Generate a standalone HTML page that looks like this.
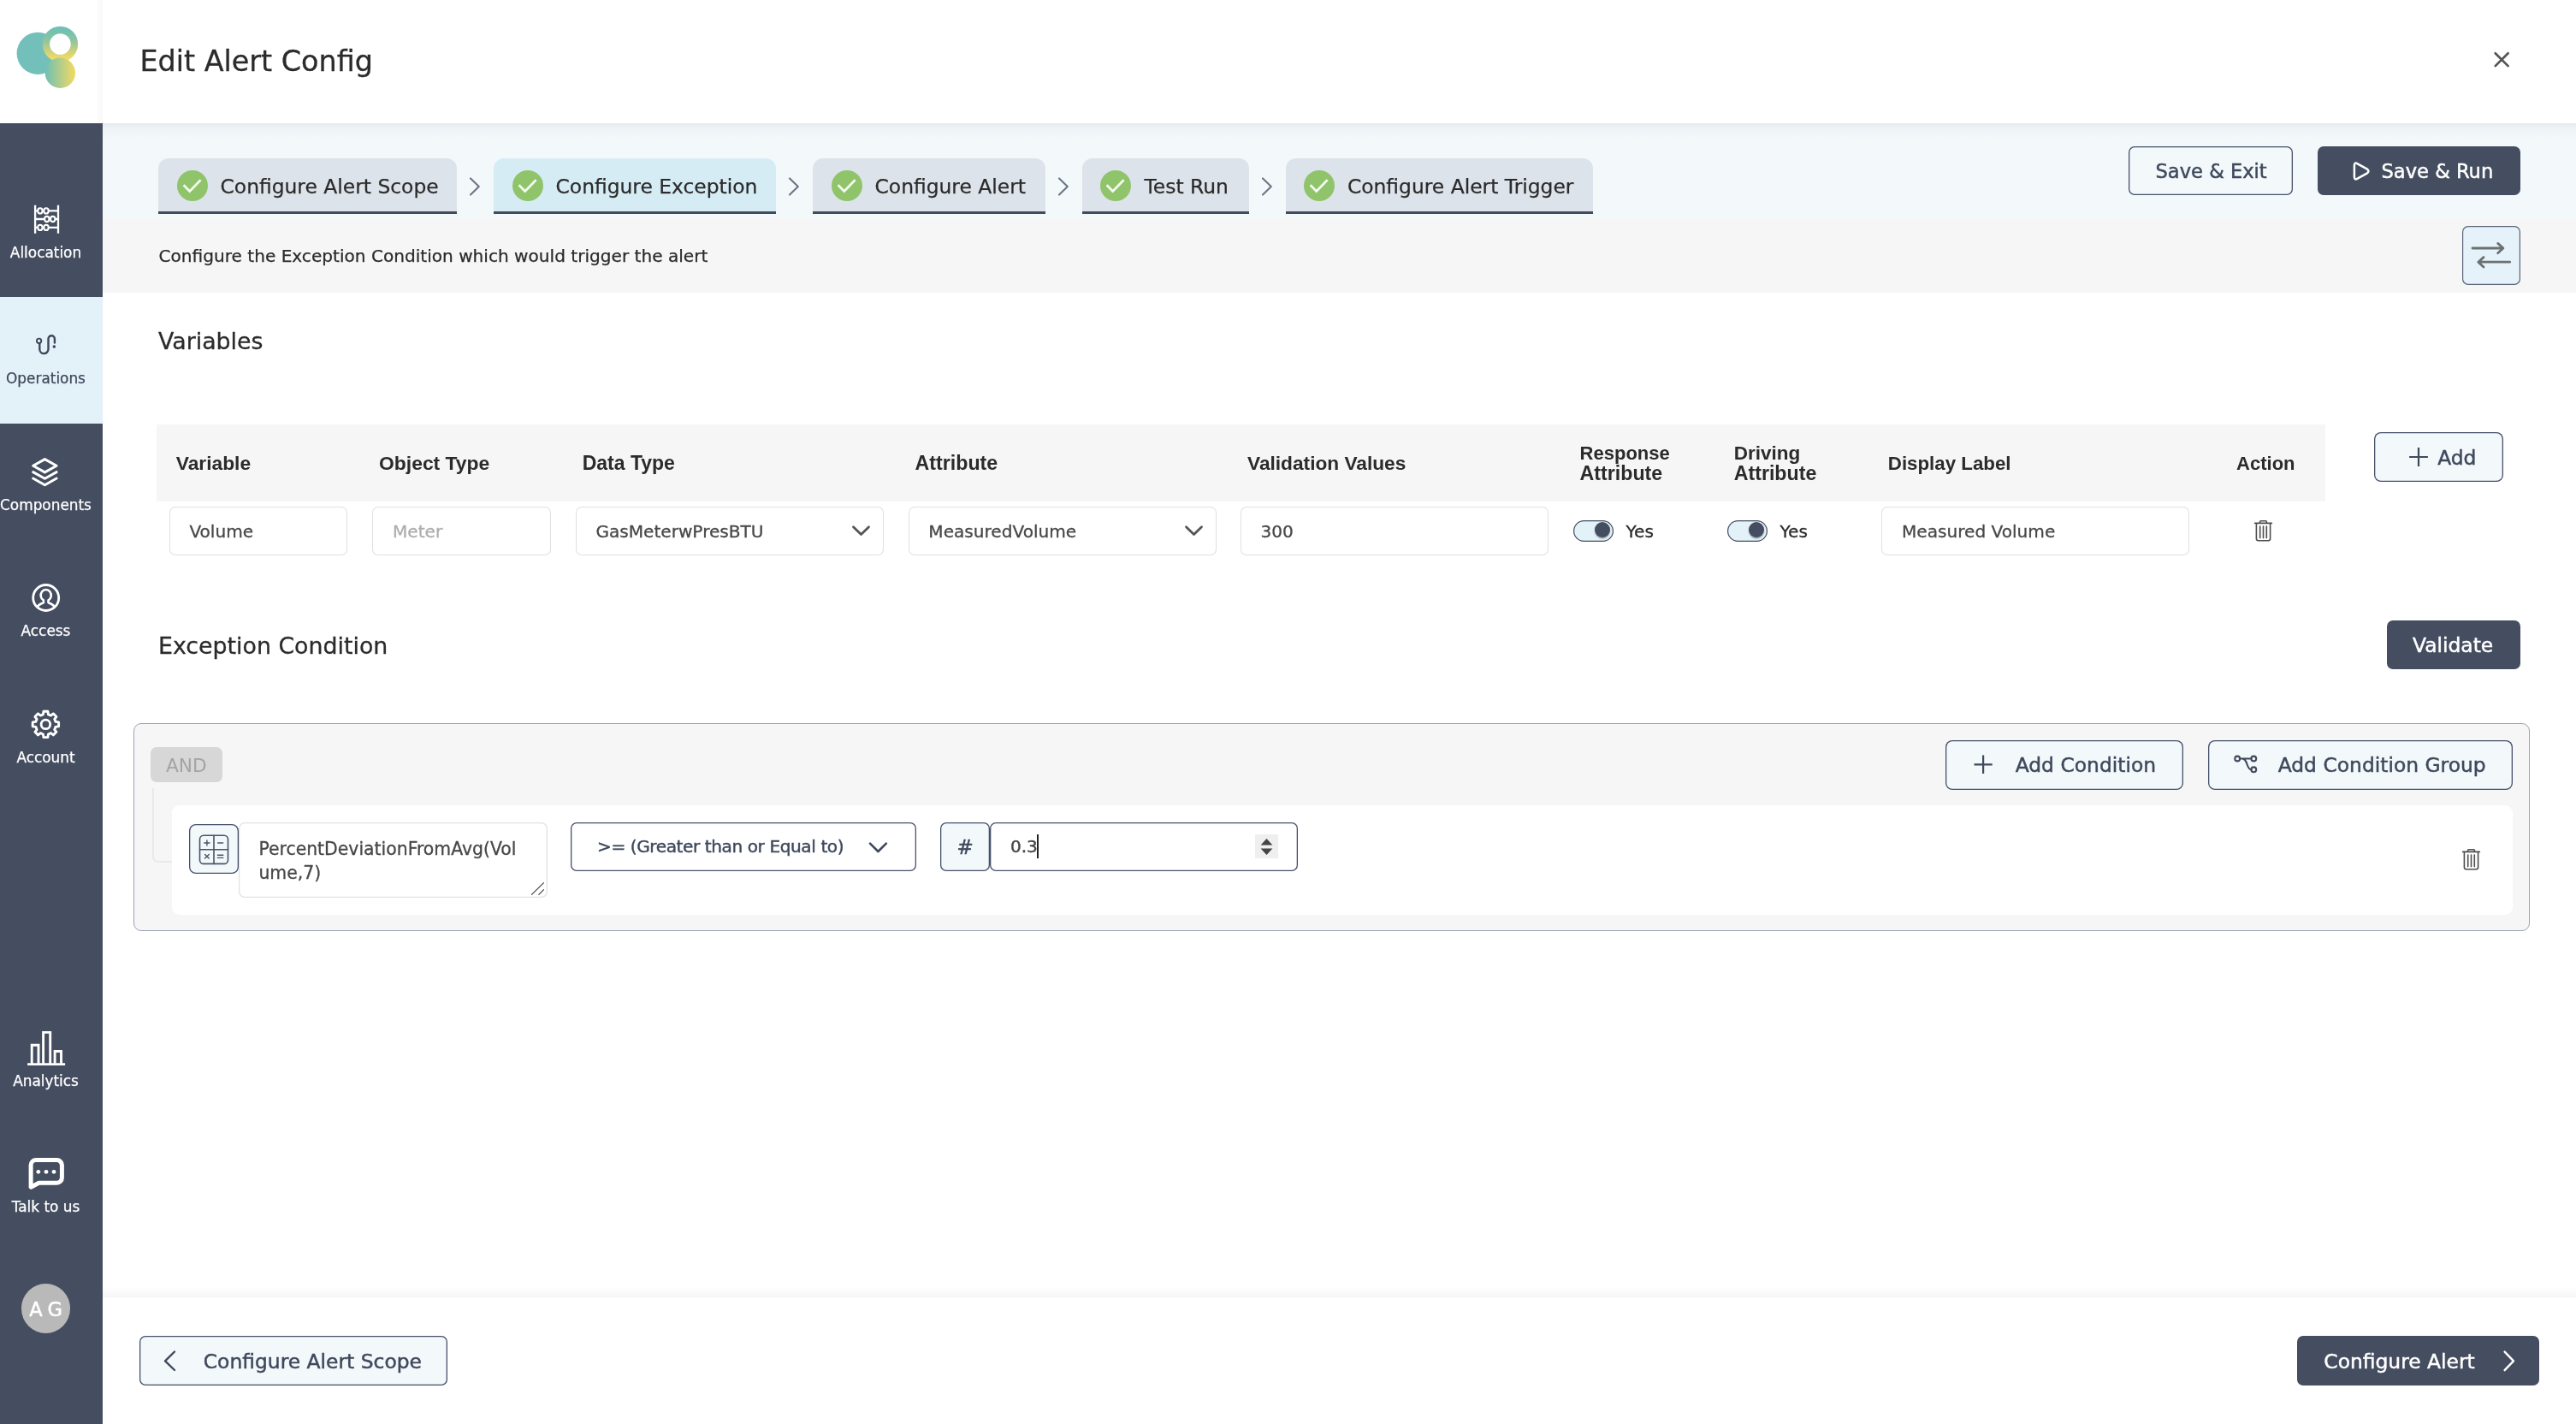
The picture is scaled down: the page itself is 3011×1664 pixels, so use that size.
<!DOCTYPE html>
<html lang="en">
<head>
<meta charset="utf-8">
<title>Edit Alert Config</title>
<style>
*{box-sizing:border-box;margin:0;padding:0}
html,body{width:3011px;height:1664px;overflow:hidden;background:#fff}
body{position:relative;will-change:transform;font-family:"DejaVu Sans","Liberation Sans",sans-serif;color:#2b2b2b;-webkit-font-smoothing:antialiased}
.abs{position:absolute}
.t{position:absolute;white-space:nowrap;line-height:1}
/* sidebar */
#side{left:0;top:0;width:120px;height:1664px;background:#454e60}
#logo{left:0;top:0;width:120px;height:144px;background:linear-gradient(90deg,#fff 0,#fff 112px,#f8f8f8 120px)}
.nav{left:0;width:120px;height:148px}
.nav svg{position:absolute;overflow:visible}
.nl{position:absolute;left:0;width:107px;text-align:center;font-size:16.9px;line-height:20px;color:#fff;white-space:nowrap;-webkit-text-stroke:.25px currentColor}
#navact{left:0;top:347px;width:120px;height:148px;background:#e3f2f8}
/* header */
#hdr{left:120px;top:0;width:2891px;height:144px;background:#fff}
#band1{left:120px;top:144px;width:2891px;height:111px;background:linear-gradient(180deg,#e4eaef 0,#eef3f7 6px,#f3f8fb 18px,#f3f8fb 100%)}
#band2{left:120px;top:254.5px;width:2891px;height:87px;background:#f6f6f6}
.tab{position:absolute;top:185px;height:65px;border-radius:12px 12px 0 0;background:#dde3ea;border-bottom:3.5px solid #434c5e}
.tab.on{background:#d6ecf5}
.tab .ck{position:absolute;left:21.2px;top:13.7px;width:36px;height:36px}
.tab span{position:absolute;left:72.5px;top:19px;font-size:23.4px;line-height:28px;white-space:nowrap;color:#2b2b2b;-webkit-text-stroke:.25px #2b2b2b}
.sep{position:absolute;top:206px;width:16px;height:24px}
.btn{position:absolute;border-radius:7px;font-size:23.4px;white-space:nowrap;-webkit-text-stroke:.45px currentColor}
.btn.lt{background:#f3f8fb;box-shadow:inset 0 0 0 1.3px #46506a;color:#3f495c}
.btn.dk{background:#454e60;color:#fff}
.btn span{position:absolute;line-height:28px}
.btn svg{position:absolute;overflow:visible}
/* table */
#thead{left:183px;top:496px;width:2535px;height:90px;background:#f6f6f6}
.th{position:absolute;font-family:"Liberation Sans","DejaVu Sans",sans-serif;font-weight:700;font-size:22.9px;line-height:23px;color:#2b2b2b;white-space:nowrap}
.inp{position:absolute;top:592px;height:56.5px;box-shadow:inset 0 0 0 1px #e0e0e0;border-radius:7px;background:#fff;font-size:20.1px;color:#484848;-webkit-text-stroke:.3px currentColor}
.inp span{position:absolute;left:23px;top:15.8px;line-height:26px;white-space:nowrap}
.inp svg{position:absolute;overflow:visible}
.tog{position:absolute;top:607.8px;width:47.2px;height:25px;border-radius:13px;background:#e3f2f9;box-shadow:inset 0 0 0 1.2px #454e60}
.tog i{position:absolute;right:4.4px;top:2.3px;width:18px;height:18px;border-radius:50%;background:#454e60;box-shadow:0 1.5px 1.5px rgba(0,0,0,.35)}
.yes{position:absolute;font-size:20.1px;line-height:26px;top:607.6px;color:#2b2b2b;-webkit-text-stroke:.3px #2b2b2b}
/* group */
#grp{left:156px;top:845px;width:2800.5px;height:243px;background:#f6f6f6;border:1.3px solid #9aa4b4;border-radius:9px}
#and{left:176px;top:873px;width:84px;height:41px;border-radius:7px;background:#d7d7d7}
#row{left:201px;top:941px;width:2736px;height:128px;background:#fff;border-radius:9px}
</style>
</head>
<body>
<!--SIDEBAR-->
<div class="abs" id="side"></div>
<div class="abs" id="navact"></div>
<div class="abs" id="logo">
<svg class="abs" style="left:0;top:0" width="120" height="144" viewBox="0 0 120 144">
<defs>
<linearGradient id="gv" x1="0" y1="0" x2="0" y2="1"><stop offset="0" stop-color="#70c0b4"/><stop offset="0.35" stop-color="#8cc4a0"/><stop offset="1" stop-color="#f2da64"/></linearGradient>
<linearGradient id="gh" x1="0" y1="0" x2="1" y2="0"><stop offset="0" stop-color="#6fc0b4"/><stop offset="1" stop-color="#f4da60"/></linearGradient>
</defs>
<circle cx="44.2" cy="62.3" r="24.6" fill="#72c0b9"/>
<circle cx="70.4" cy="51.5" r="16.5" fill="#fff" stroke="url(#gv)" stroke-width="8.4"/>
<circle cx="70.4" cy="85.2" r="17.7" fill="url(#gh)"/>
</svg>
</div>
<svg class="abs" style="left:0;top:0" width="120" height="1664" viewBox="0 0 120 1664" fill="none" stroke="#fff" stroke-linecap="round" stroke-linejoin="round">
<!-- allocation -->
<g stroke-width="2.3">
<path d="M41.1 239.8V272.7M68 239.8V272.7M41.1 246.4H68M41.1 256H68M41.1 265.9H68" stroke-linecap="butt"/>
<g fill="#454e60" stroke-width="2.1">
<ellipse cx="46.9" cy="246.4" rx="2.7" ry="3.1"/><ellipse cx="54" cy="246.4" rx="2.7" ry="3.1"/>
<ellipse cx="54.8" cy="256" rx="2.7" ry="3.1"/><ellipse cx="61.7" cy="256" rx="2.7" ry="3.1"/>
<ellipse cx="46.9" cy="265.9" rx="2.7" ry="3.1"/><ellipse cx="54" cy="265.9" rx="2.7" ry="3.1"/>
</g></g>
<!-- operations -->
<g stroke="#3f485b" stroke-width="2.4">
<path d="M46.3 401.8V408a5.1 5.1 0 0 0 10.2 0V396a3.7 3.7 0 0 1 7.4 0V400.6"/>
<circle cx="45.6" cy="398.3" r="2.7" stroke-width="1.9"/>
<circle cx="63.3" cy="405.1" r="1.8" fill="#3f485b" stroke="none"/>
</g>
<!-- components -->
<g stroke-width="3">
<path d="M52.4 536.6L66.1 544.25L52.4 551.9L38.7 544.25Z"/>
<path d="M38.7 551.65L52.4 559.3L66.1 551.65"/>
<path d="M38.7 559.05L52.4 566.7L66.1 559.05"/>
</g>
<!-- access -->
<g stroke-width="2.8">
<circle cx="53.7" cy="698.5" r="15"/>
<path d="M43.6 709.3c1.6-3.4 5.2-4 7.3-5.2v-2.6a6.1 6.6 0 1 1 5.6 0v2.6c2.1 1.2 5.7 1.8 7.3 5.2" stroke-width="2.6"/>
</g>
<!-- account -->
<g stroke-width="2.9">
<path d="M50.4 834.8 L50.9 831.2 L55.9 831.2 L56.4 834.8 L59.5 836.1 L62.3 833.9 L65.9 837.5 L63.7 840.3 L65.0 843.4 L68.6 843.9 L68.6 848.9 L65.0 849.4 L63.7 852.5 L65.9 855.3 L62.3 858.9 L59.5 856.7 L56.4 858.0 L55.9 861.6 L50.9 861.6 L50.4 858.0 L47.3 856.7 L44.5 858.9 L40.9 855.3 L43.1 852.5 L41.8 849.4 L38.2 848.9 L38.2 843.9 L41.8 843.4 L43.1 840.3 L40.9 837.5 L44.5 833.9 L47.3 836.1Z"/>
<circle cx="53.4" cy="846.4" r="5.3" stroke-width="2.8"/>
</g>
<!-- analytics -->
<g stroke-width="2.9" stroke-linecap="butt" stroke-linejoin="miter">
<path d="M32.1 1243.6H76.1M37.2 1243.5V1221.2H45V1243.5M50.6 1243.5V1206.4H58.7V1243.5M64.1 1243.5V1228.5H71.5V1243.5"/>
</g>
<!-- talk -->
<g stroke-width="5">
<path d="M36.1 1387.2V1361.6a6 6 0 0 1 6-6H66.4a6 6 0 0 1 6 6V1376.2a6 6 0 0 1-6 6H45.5Z"/>
<g fill="#fff" stroke="none"><circle cx="44.8" cy="1369.3" r="2.4"/><circle cx="54" cy="1369.3" r="2.4"/><circle cx="63" cy="1369.3" r="2.4"/></g>
</g>
</svg>
<div class="nl" style="top:285px">Allocation</div>
<div class="nl" style="top:432.4px;color:#3f485b">Operations</div>
<div class="nl" style="top:579.9px">Components</div>
<div class="nl" style="top:727.4px">Access</div>
<div class="nl" style="top:874.9px">Account</div>
<div class="nl" style="top:1253.2px">Analytics</div>
<div class="nl" style="top:1400.1px">Talk to us</div>
<div class="abs" style="left:24.6px;top:1500px;width:57.5px;height:58px;border-radius:50%;background:#b9b9b9;color:#fff;font-size:22.5px;line-height:61px;-webkit-text-stroke:.5px #fff;text-align:center;letter-spacing:-.6px;white-space:nowrap">A G</div>
<!--/SIDEBAR-->
<!--HEADER-->
<div class="abs" id="hdr"></div>
<div class="abs" id="band1"></div>
<div class="abs" id="band2"></div>
<div class="t" style="left:163.4px;top:49.7px;font-size:33.4px;-webkit-text-stroke:.3px #2b2b2b;line-height:44px;color:#2b2b2b">Edit Alert Config</div>
<svg class="abs" style="left:2910px;top:56px;overflow:visible" width="28" height="28" viewBox="2910 56 28 28" fill="none" stroke="#555" stroke-width="2.7" stroke-linecap="round"><path d="M2916.7 62.2L2931.6 77.1M2931.6 62.2L2916.7 77.1"/></svg>
<div class="tab" style="left:185px;width:349px"><svg class="ck" style="left:22px" viewBox="0 0 36 36"><circle cx="18" cy="18" r="18" fill="#90c46a"/><path d="M7.6 17.2L14.7 24.5L27.6 11.2" fill="none" stroke="#f4faef" stroke-width="2.7"/></svg><span>Configure Alert Scope</span></div>
<div class="tab on" style="left:577px;width:330px"><svg class="ck" style="left:22px" viewBox="0 0 36 36"><circle cx="18" cy="18" r="18" fill="#90c46a"/><path d="M7.6 17.2L14.7 24.5L27.6 11.2" fill="none" stroke="#f4faef" stroke-width="2.7"/></svg><span>Configure Exception</span></div>
<div class="tab" style="left:950px;width:272px"><svg class="ck" style="left:21.7px" viewBox="0 0 36 36"><circle cx="18" cy="18" r="18" fill="#90c46a"/><path d="M7.6 17.2L14.7 24.5L27.6 11.2" fill="none" stroke="#f4faef" stroke-width="2.7"/></svg><span>Configure Alert</span></div>
<div class="tab" style="left:1265px;width:195px"><svg class="ck" style="left:21.3px" viewBox="0 0 36 36"><circle cx="18" cy="18" r="18" fill="#90c46a"/><path d="M7.6 17.2L14.7 24.5L27.6 11.2" fill="none" stroke="#f4faef" stroke-width="2.7"/></svg><span>Test Run</span></div>
<div class="tab" style="left:1503px;width:359px"><svg class="ck" style="left:21px" viewBox="0 0 36 36"><circle cx="18" cy="18" r="18" fill="#90c46a"/><path d="M7.6 17.2L14.7 24.5L27.6 11.2" fill="none" stroke="#f4faef" stroke-width="2.7"/></svg><span style="left:71.9px">Configure Alert Trigger</span></div>
<svg class="sep" style="left:546.5px" viewBox="0 0 16 24" fill="none" stroke="#6c7486" stroke-width="2.1" stroke-linecap="round" stroke-linejoin="round"><path d="M3 2.4L12.8 12L3 21.6"/></svg>
<svg class="sep" style="left:919.5px" viewBox="0 0 16 24" fill="none" stroke="#6c7486" stroke-width="2.1" stroke-linecap="round" stroke-linejoin="round"><path d="M3 2.4L12.8 12L3 21.6"/></svg>
<svg class="sep" style="left:1234.5px" viewBox="0 0 16 24" fill="none" stroke="#6c7486" stroke-width="2.1" stroke-linecap="round" stroke-linejoin="round"><path d="M3 2.4L12.8 12L3 21.6"/></svg>
<svg class="sep" style="left:1472.5px" viewBox="0 0 16 24" fill="none" stroke="#6c7486" stroke-width="2.1" stroke-linecap="round" stroke-linejoin="round"><path d="M3 2.4L12.8 12L3 21.6"/></svg>
<div class="btn lt" style="left:2488px;top:171px;width:192px;height:56.8px"><span style="left:31.5px;top:14.7px;font-size:22.6px">Save &amp; Exit</span></div>
<div class="btn dk" style="left:2709px;top:171px;width:237px;height:56.8px"><svg style="left:0;top:0" width="237" height="57" viewBox="0 0 237 57" fill="none" stroke="#fff" stroke-width="2.5" stroke-linejoin="round"><path d="M42.9 22.4V35.6Q42.9 39.8 46.6 37.7L58 31.3Q60.9 29 58 26.7L46.6 20.3Q42.9 18.2 42.9 22.4Z"/></svg><span style="left:74.5px;top:14.7px;font-size:22.6px">Save &amp; Run</span></div>
<div class="t" style="left:185.5px;top:286px;font-size:20.1px;line-height:26px;color:#2b2b2b;-webkit-text-stroke:.25px #2b2b2b">Configure the Exception Condition which would trigger the alert</div>
<div class="btn" style="left:2878.2px;top:264px;width:67.6px;height:69px;background:#e5f2f9;box-shadow:inset 0 0 0 1.2px #5a6478"><svg style="left:0;top:0" width="68" height="68" viewBox="0 0 68 68" fill="none" stroke="#6b7071" stroke-width="2.8" stroke-linecap="round" stroke-linejoin="round"><path d="M12 26H47.5M41.7 20.4L47.9 26L41.7 31.7M55.7 42.2H19.2M25 36.6L18.8 42.2L25 48"/></svg></div>
<!--/HEADER-->
<!--TABLE-->
<div class="t" style="left:185px;top:381px;font-size:26.8px;line-height:36px;color:#2b2b2b;-webkit-text-stroke:.3px #2b2b2b">Variables</div>
<div class="abs" id="thead"></div>
<div class="th" style="left:205.7px;top:529.9px;font-size:22.8px">Variable</div>
<div class="th" style="left:443px;top:529.9px;font-size:22.9px">Object Type</div>
<div class="th" style="left:680.7px;top:529.9px;font-size:23px">Data Type</div>
<div class="th" style="left:1069.6px;top:529.9px;font-size:23.2px">Attribute</div>
<div class="th" style="left:1458px;top:529.9px;font-size:22.7px">Validation Values</div>
<div class="th" style="left:1846.6px;top:518.3px;line-height:22.8px;font-size:23.2px"><span style="font-size:22px">Response</span><br>Attribute</div>
<div class="th" style="left:2026.7px;top:518.3px;line-height:22.8px;font-size:23.2px"><span style="font-size:22.5px">Driving</span><br>Attribute</div>
<div class="th" style="left:2206.8px;top:529.9px;font-size:22.3px">Display Label</div>
<div class="th" style="left:2614.1px;top:529.9px;font-size:22px">Action</div>
<div class="btn lt" style="left:2775px;top:505px;width:151px;height:57.8px;border-radius:8px"><svg style="left:0;top:0" width="151" height="58" viewBox="0 0 151 58" fill="none" stroke="#3f495c" stroke-width="2.2" stroke-linecap="butt"><path d="M41.1 29H62.9M52 18V40"/></svg><span style="left:74.2px;top:16.2px">Add</span></div>
<div class="inp" style="left:198px;width:207.6px"><span style="left:23.4px">Volume</span></div>
<div class="inp" style="left:435.3px;width:209.2px;color:#adadad"><span style="left:23.7px">Meter</span></div>
<div class="inp" style="left:673.2px;width:359.6px"><span style="left:23.2px">GasMeterwPresBTU</span><svg style="left:322.5px;top:22px" width="21" height="13" viewBox="0 0 21 13" fill="none" stroke="#555" stroke-width="2.8" stroke-linecap="round" stroke-linejoin="round"><path d="M1.5 1.8L10.5 10.6L19.5 1.8"/></svg></div>
<div class="inp" style="left:1062px;width:360px"><span style="left:23.3px">MeasuredVolume</span><svg style="left:323px;top:22px" width="21" height="13" viewBox="0 0 21 13" fill="none" stroke="#555" stroke-width="2.8" stroke-linecap="round" stroke-linejoin="round"><path d="M1.5 1.8L10.5 10.6L19.5 1.8"/></svg></div>
<div class="inp" style="left:1450px;width:360.2px"><span style="left:23.4px">300</span></div>
<div class="tog" style="left:1838.8px"><i></i></div><div class="yes" style="left:1900.5px">Yes</div>
<div class="tog" style="left:2019px"><i></i></div><div class="yes" style="left:2080.5px">Yes</div>
<div class="inp" style="left:2199.3px;width:359.8px"><span style="left:23.7px">Measured Volume</span></div>
<svg class="abs" style="left:2635.3px;top:608px;overflow:visible" width="21" height="25" viewBox="0 0 21 25" fill="none" stroke="#4d4d4d" stroke-width="1.6" stroke-linecap="round"><path d="M0.6 3.4H20.4M6.6 3.2V1.6Q6.6 0.7 7.5 0.7H13.5Q14.4 0.7 14.4 1.6V3.2M2.4 3.4V21.6Q2.4 23.8 4.6 23.8H16.4Q18.6 23.8 18.6 21.6V3.4M6.7 7V20.6M10.5 7V20.6M14.3 7V20.6"/></svg>
<div class="t" style="left:185px;top:737.4px;font-size:26.8px;line-height:36px;color:#2b2b2b;-webkit-text-stroke:.3px #2b2b2b">Exception Condition</div>
<div class="btn dk" style="left:2790px;top:725.3px;width:155.8px;height:56.3px"><span style="left:30px;top:14.8px">Validate</span></div>
<!--/TABLE-->
<!--GROUP-->
<div class="abs" id="grp"></div>
<div class="abs" id="and"></div>
<div class="t" style="left:194px;top:882px;font-size:21.7px;line-height:26px;color:#a4a4a4">AND</div>
<div class="abs" style="left:178.3px;top:921px;width:24px;height:87px;border-left:2.6px solid #e9e9e9;border-bottom:2.6px solid #e9e9e9;border-bottom-left-radius:7px"></div>
<div class="btn lt" style="left:2274.1px;top:865.2px;width:277.5px;height:57.4px;border-radius:8px"><svg style="left:0;top:0" width="277" height="57" viewBox="0 0 277 57" fill="none" stroke="#3f495c" stroke-width="2.2"><path d="M33.5 28.3H54.7M44.1 17.5V39.1"/></svg><span style="left:81.6px;top:14.9px">Add Condition</span></div>
<div class="btn lt" style="left:2581.2px;top:865.2px;width:355.4px;height:57.4px;border-radius:8px"><svg style="left:0;top:0" width="355" height="57" viewBox="0 0 355 57" fill="none" stroke="#3f495c" stroke-width="2.1" stroke-linecap="round"><circle cx="34.2" cy="21.5" r="2.9"/><circle cx="53.3" cy="21.5" r="2.9"/><circle cx="53.3" cy="34.3" r="2.9"/><path d="M37 21.5H50.5M40.5 21.6C46.5 22 44.5 34.3 50.6 34.3"/></svg><span style="left:81.5px;top:14.9px">Add Condition Group</span></div>
<div class="abs" id="row"></div>
<div class="btn lt" style="left:221.1px;top:963.2px;width:57.6px;height:57.6px;border-radius:8px"><svg style="left:0;top:0" width="58" height="58" viewBox="0 0 58 58" fill="none" stroke="#4a5468" stroke-width="1.6" stroke-linecap="round"><rect x="12.5" y="13.2" width="33" height="33.2" rx="4.5"/><path d="M29 13.2V46.4M12.5 29.8H45.5"/><path d="M17.8 22H24M20.9 18.9V25.1M33.6 22H39.6M18.6 35.4L23.2 40M23.2 35.4L18.6 40M33.4 36.2H39.8M33.4 39.4H39.8" stroke-width="1.4"/></svg></div>
<div class="abs" style="left:279.2px;top:961.1px;width:360.4px;height:87.5px;border-radius:7px;background:#fff;box-shadow:inset 0 0 0 1.3px #e2e2e2"></div>
<div class="t" style="left:302.4px;top:977.6px;font-size:20.4px;line-height:28.8px;color:#484848;-webkit-text-stroke:.3px #484848">PercentDeviationFromAvg(Vol<br>ume,7)</div>
<svg class="abs" style="left:618px;top:1028px" width="20" height="20" viewBox="617 1028 20 20" fill="none" stroke="#3a3a3a" stroke-width="1.1" stroke-linecap="round"><path d="M620.4 1045.3L634.5 1031.6M628.8 1045.3L634.5 1039.7"/></svg>
<div class="btn lt" style="left:666.8px;top:961px;width:404px;height:56.6px;box-shadow:inset 0 0 0 1.3px #46506a;background:#fff"><span style="left:31.2px;top:15.4px;font-size:20.1px;line-height:26px;letter-spacing:-.42px">&gt;= (Greater than or Equal to)</span><svg style="left:348px;top:22px" width="23" height="14" viewBox="0 0 23 14" fill="none" stroke="#3f495c" stroke-width="2.6" stroke-linecap="round" stroke-linejoin="round"><path d="M2 2.6L11.4 12L20.8 2.6"/></svg></div>
<div class="btn lt" style="left:1099.3px;top:961px;width:57.8px;height:56.6px"><span style="left:0;width:57.8px;text-align:center;top:14.5px;font-size:23px">#</span></div>
<div class="btn lt" style="left:1156.6px;top:961px;width:360.3px;height:56.6px;background:#fff"><span style="left:24.3px;top:15.4px;font-size:20.1px;line-height:26px;color:#484848">0.3</span>
<i class="abs" style="left:55.6px;top:14px;width:1.7px;height:27.5px;background:#222"></i>
<i class="abs" style="left:310.3px;top:14px;width:27px;height:28px;background:#efefef"></i>
<svg style="left:310.3px;top:14px" width="27" height="28" viewBox="0 0 27 28" stroke="none" fill="#454545"><path d="M6.6 12.4L13.5 5L20.4 12.4ZM6.6 16.6L13.5 24L20.4 16.6Z"/></svg></div>
<svg class="abs" style="left:2878.4px;top:991.8px;overflow:visible" width="21" height="25" viewBox="0 0 21 25" fill="none" stroke="#4d4d4d" stroke-width="1.6" stroke-linecap="round"><path d="M0.6 3.4H20.4M6.6 3.2V1.6Q6.6 0.7 7.5 0.7H13.5Q14.4 0.7 14.4 1.6V3.2M2.4 3.4V21.6Q2.4 23.8 4.6 23.8H16.4Q18.6 23.8 18.6 21.6V3.4M6.7 7V20.6M10.5 7V20.6M14.3 7V20.6"/></svg>
<!--/GROUP-->
<!--FOOTER-->
<div class="abs" style="left:120px;top:1504px;width:2891px;height:12px;background:linear-gradient(180deg,rgba(246,246,246,0) 0,#f6f6f6 100%)"></div>
<div class="btn lt" style="left:163.2px;top:1561px;width:359.4px;height:57.6px"><svg style="left:0;top:0" width="359" height="58" viewBox="0 0 359 58" fill="none" stroke="#3f495c" stroke-width="2.4" stroke-linecap="round" stroke-linejoin="round"><path d="M41 18.5L30 29.3L41 40"/></svg><span style="left:74.6px;top:15.6px">Configure Alert Scope</span></div>
<div class="btn dk" style="left:2685px;top:1561px;width:283px;height:57.9px"><span style="left:31.3px;top:15.6px">Configure Alert</span><svg style="left:0;top:0" width="283" height="58" viewBox="0 0 283 58" fill="none" stroke="#fff" stroke-width="2.4" stroke-linecap="round" stroke-linejoin="round"><path d="M242.6 18.6L253 29.4L242.6 40.2"/></svg></div>
<!--/FOOTER-->
</body>
</html>
